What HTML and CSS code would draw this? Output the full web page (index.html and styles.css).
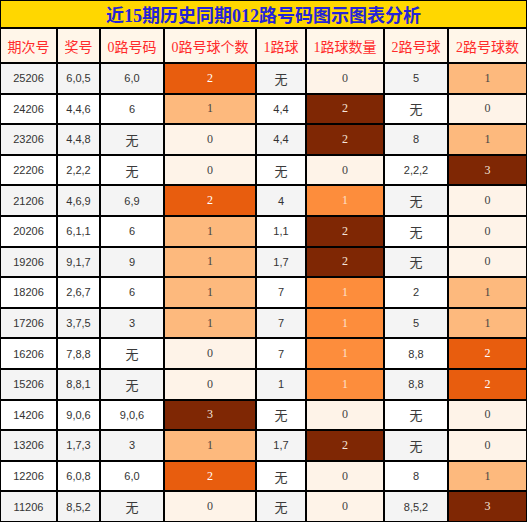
FILE: index.html
```html
<!DOCTYPE html>
<html lang="zh">
<head>
    <meta charset="UTF-8">
    <title>近15期历史同期012路号码图示图表分析</title>
    <link rel="stylesheet" href="styles.css">
</head>
<body>
    <table class="chart">
        <colgroup>
            <col class="w-period">
            <col class="w-prize">
            <col class="w-r0">
            <col class="w-r0n">
            <col class="w-r1">
            <col class="w-r1n">
            <col class="w-r2">
            <col class="w-r2n">
        </colgroup>
        <tr class="title-row">
            <td colspan="8" class="title">近15期历史同期012路号码图示图表分析</td>
        </tr>
        <tr class="head-row">
            <th>期次号</th>
            <th>奖号</th>
            <th>0路号码</th>
            <th>0路号球个数</th>
            <th>1路球</th>
            <th>1路球数量</th>
            <th>2路号球</th>
            <th>2路号球数</th>
        </tr>
        <tr class="odd"><td>25206</td><td>6,0,5</td><td>6,0</td><td class="n c2">2</td><td class="none">无</td><td class="n c0">0</td><td>5</td><td class="n c1">1</td></tr>
        <tr><td>24206</td><td>4,4,6</td><td>6</td><td class="n c1">1</td><td>4,4</td><td class="n c3">2</td><td class="none">无</td><td class="n c0">0</td></tr>
        <tr class="odd"><td>23206</td><td>4,4,8</td><td class="none">无</td><td class="n c0">0</td><td>4,4</td><td class="n c3">2</td><td>8</td><td class="n c1">1</td></tr>
        <tr><td>22206</td><td>2,2,2</td><td class="none">无</td><td class="n c0">0</td><td class="none">无</td><td class="n c0">0</td><td>2,2,2</td><td class="n c3">3</td></tr>
        <tr class="odd"><td>21206</td><td>4,6,9</td><td>6,9</td><td class="n c2">2</td><td>4</td><td class="n m1">1</td><td class="none">无</td><td class="n c0">0</td></tr>
        <tr><td>20206</td><td>6,1,1</td><td>6</td><td class="n c1">1</td><td>1,1</td><td class="n c3">2</td><td class="none">无</td><td class="n c0">0</td></tr>
        <tr class="odd"><td>19206</td><td>9,1,7</td><td>9</td><td class="n c1">1</td><td>1,7</td><td class="n c3">2</td><td class="none">无</td><td class="n c0">0</td></tr>
        <tr><td>18206</td><td>2,6,7</td><td>6</td><td class="n c1">1</td><td>7</td><td class="n m1">1</td><td>2</td><td class="n c1">1</td></tr>
        <tr class="odd"><td>17206</td><td>3,7,5</td><td>3</td><td class="n c1">1</td><td>7</td><td class="n m1">1</td><td>5</td><td class="n c1">1</td></tr>
        <tr><td>16206</td><td>7,8,8</td><td class="none">无</td><td class="n c0">0</td><td>7</td><td class="n m1">1</td><td>8,8</td><td class="n c2">2</td></tr>
        <tr class="odd"><td>15206</td><td>8,8,1</td><td class="none">无</td><td class="n c0">0</td><td>1</td><td class="n m1">1</td><td>8,8</td><td class="n c2">2</td></tr>
        <tr><td>14206</td><td>9,0,6</td><td>9,0,6</td><td class="n c3">3</td><td class="none">无</td><td class="n c0">0</td><td class="none">无</td><td class="n c0">0</td></tr>
        <tr class="odd"><td>13206</td><td>1,7,3</td><td>3</td><td class="n c1">1</td><td>1,7</td><td class="n c3">2</td><td class="none">无</td><td class="n c0">0</td></tr>
        <tr><td>12206</td><td>6,0,8</td><td>6,0</td><td class="n c2">2</td><td class="none">无</td><td class="n c0">0</td><td>8</td><td class="n c1">1</td></tr>
        <tr class="odd"><td>11206</td><td>8,5,2</td><td class="none">无</td><td class="n c0">0</td><td class="none">无</td><td class="n c0">0</td><td>8,5,2</td><td class="n c3">3</td></tr>
    </table>
</body>
</html>
```

FILE: styles.css
```css
body {
    margin: 0;
    background: #fff;
}
.chart {
    width: 527px;
    table-layout: fixed;
    border-collapse: separate;
    border-spacing: 0;
    font-family: 'Liberation Sans', 'Noto Sans CJK SC', sans-serif;
    font-size: 11px;
    color: #333;
}
.w-period { width: 57px; }
.w-prize { width: 43px; }
.w-r0 { width: 64px; }
.w-r0n { width: 92px; }
.w-r1 { width: 50px; }
.w-r1n { width: 78px; }
.w-r2 { width: 64px; }
.w-r2n { width: 79px; }
.chart td, .chart th {
    border: 1px solid #000;
    padding: 0;
    text-align: center;
    white-space: nowrap;
    overflow: hidden;
}
.title {
    background: #ffd700;
    color: #2424d8;
    font-family: 'Liberation Serif', 'Noto Sans CJK SC', serif;
    font-size: 18px;
    font-weight: bold;
}
.head-row th {
    background: #fff6e9;
    color: #ff2b2b;
    font-family: 'Liberation Serif', 'Noto Sans CJK SC', serif;
    font-size: 14px;
    font-weight: normal;
}
.chart tr { height: 30.6px; }
.chart tr.title-row { height: 28px; }
.chart tr.head-row { height: 35px; }
.odd td { background: #f4f4f4; }
.none {
    font-family: 'Noto Sans CJK SC', sans-serif;
    font-size: 13px;
    color: #3a3a3a;
}
.n {
    font-family: 'Liberation Serif', serif;
    font-size: 12px;
}
.chart td.c0 { background: #fef3e8; color: #444; }
.chart td.c1 { background: #fdb97d; color: #444; }
.chart td.m1 { background: #fd8d3c; color: #fde3cc; }
.chart td.c2 { background: #e85d0e; color: #fff; }
.chart td.c3 { background: #7f2704; color: #f5e6dc; }
```
